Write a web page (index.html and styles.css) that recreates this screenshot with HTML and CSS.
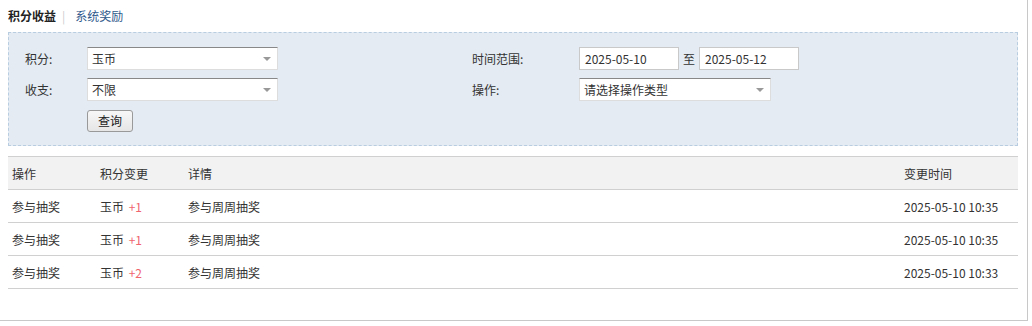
FILE: index.html
```html
<!DOCTYPE html>
<html lang="zh">
<head>
<meta charset="utf-8">
<link rel="stylesheet" href="styles.css">
</head>
<body>
<div class="page">
  <div class="tabs">
    <span class="tab active">积分收益</span>
    <span class="sep">|</span>
    <span class="tab link">系统奖励</span>
  </div>
  <div class="filter">
    <div class="col left">
      <div class="row">
        <label class="lbl">积分:</label>
        <div class="select w190"><span>玉币</span><i class="caret"></i></div>
      </div>
      <div class="row">
        <label class="lbl">收支:</label>
        <div class="select w190"><span>不限</span><i class="caret"></i></div>
      </div>
      <div class="row">
        <span class="lbl"></span>
        <button class="btn">查询</button>
      </div>
    </div>
    <div class="col right">
      <div class="row">
        <label class="lbl lbl-r">时间范围:</label>
        <div class="input">2025-05-10</div>
        <span class="to">至</span>
        <div class="input">2025-05-12</div>
      </div>
      <div class="row">
        <label class="lbl lbl-r">操作:</label>
        <div class="select w191"><span>请选择操作类型</span><i class="caret"></i></div>
      </div>
    </div>
  </div>
  <table class="list">
    <thead>
      <tr><th class="c1">操作</th><th class="c2">积分变更</th><th class="c3">详情</th><th>变更时间</th></tr>
    </thead>
    <tbody>
      <tr><td>参与抽奖</td><td>玉币 <span class="plus">+1</span></td><td>参与周周抽奖</td><td>2025-05-10 10:35</td></tr>
      <tr><td>参与抽奖</td><td>玉币 <span class="plus">+1</span></td><td>参与周周抽奖</td><td>2025-05-10 10:35</td></tr>
      <tr><td>参与抽奖</td><td>玉币 <span class="plus">+2</span></td><td>参与周周抽奖</td><td>2025-05-10 10:33</td></tr>
    </tbody>
  </table>
</div>
</body>
</html>
```
FILE: styles.css
```css
* { box-sizing: border-box; }
html, body { margin: 0; padding: 0; background: #fff; }
body {
  font-family: "Noto Sans CJK SC", "Noto Sans", sans-serif;
  font-size: 12px;
  color: #333;
}
.page {
  width: 1028px;
  height: 321px;
  border-right: 1px solid #c8c8c8;
  border-bottom: 1px solid #c8c8c8;
  padding: 6px 9px 0 8px;
}
.tabs {
  height: 20px;
  line-height: 20px;
  display: flex;
  align-items: center;
}
.tab.active { font-weight: bold; color: #222; }
.sep { color: #ccc; margin: 0 10px 0 6px; }
.tab.link { color: #2f5a8c; }
.filter {
  margin-top: 6px;
  height: 114px;
  background: #e4ebf2;
  border: 1px dashed #b9cde0;
  padding: 14px 0 0 16px;
  display: flex;
}
.col.left { width: 447px; }
.row {
  display: flex;
  align-items: center;
  height: 23px;
  margin-bottom: 8px;
}
.lbl { width: 62px; display: inline-block; }
.lbl-r { width: 107px; }
.select {
  height: 23px;
  background: #fff;
  border: 1px solid #ddd;
  border-top-color: #888;
  display: flex;
  align-items: center;
  padding: 0 0 0 4px;
  position: relative;
}
.w190 { width: 191px; }
.w191 { width: 192px; }
.caret {
  position: absolute;
  right: 6px;
  top: 9px;
  width: 0; height: 0;
  border-left: 4px solid transparent;
  border-right: 4px solid transparent;
  border-top: 4px solid #999;
}
.input {
  width: 100px;
  height: 23px;
  background: #fff;
  border: 1px solid #c9c9c9;
  padding: 0 5px;
  line-height: 21px;
}
.to { margin: 0 4px 0 4px; }
.btn {
  font-family: inherit;
  font-size: 12px;
  color: #222;
  height: 22px;
  width: 46px;
  padding: 0;
  border: 1px solid #999;
  border-radius: 3px;
  background: linear-gradient(#f7f7f7, #e6e6e6);
}
.list {
  margin-top: 10px;
  width: 1010px;
  border-collapse: collapse;
}
.list th, .list td {
  height: 33px;
  text-align: left;
  font-weight: normal;
  padding: 0 0 0 4px;
  border-bottom: 1px solid #d0d0d0;
}
.list thead th {
  background: #f2f2f2;
  border-top: 1px solid #d0d0d0;
  height: 33px;
}
.c1, .c2 { width: 88px; }
.c3 { width: 716px; }
.plus { color: #f0646e; margin-left: 2px; }
```
